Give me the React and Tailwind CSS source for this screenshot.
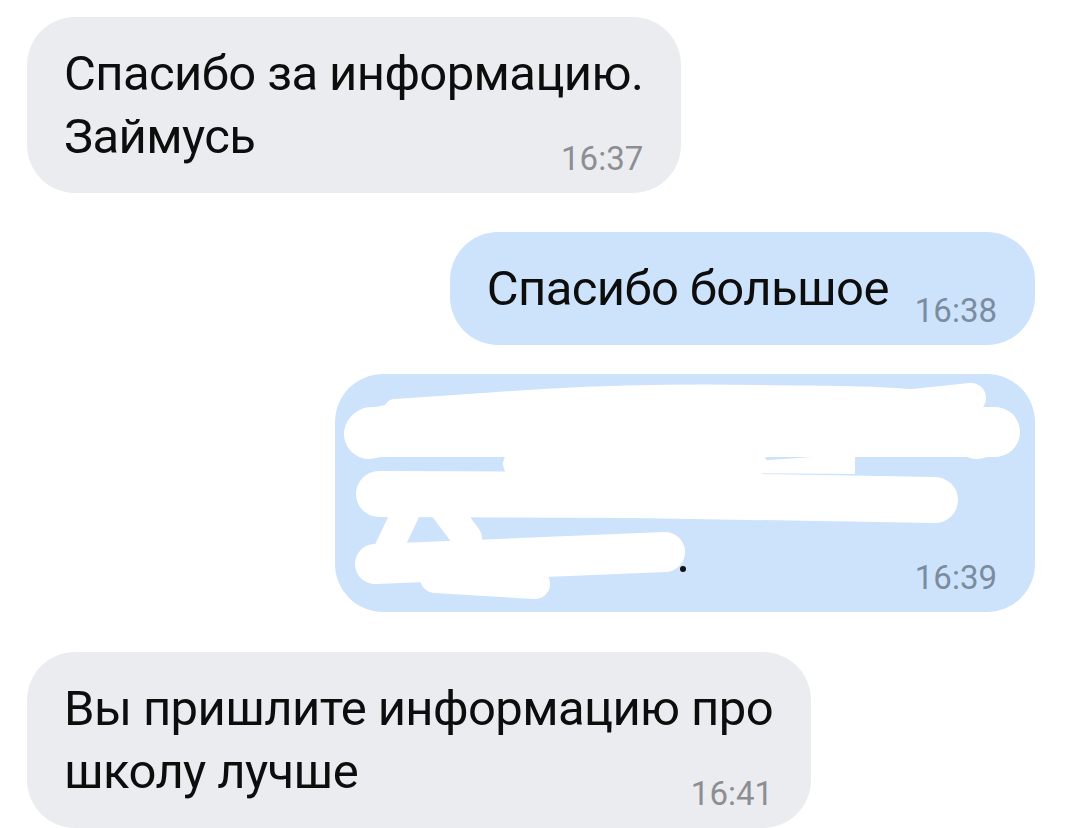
const inbound = "bg-[#ebecf0]";
const outbound = "bg-[#cde3fc]";

const Time = ({ value, mine }) => (
  <span
    className={`ml-auto pl-[26px] mb-[-7px] text-[33px] leading-[33px] tracking-normal whitespace-nowrap ${
      mine ? "text-[#7b8c9f]" : "text-[#8e8e92]"
    }`}
  >
    {value}
  </span>
);

const Bubble = ({ lines, time, mine, className = "" }) => {
  const head = lines.slice(0, -1);
  const last = lines[lines.length - 1];
  return (
    <div
      className={`rounded-[48px] pl-[37px] pr-[38px] pt-[25px] pb-[25px] text-[49px] leading-[63px] tracking-[-0.6px] text-[#0d0d0d] ${
        mine ? outbound + " self-end" : inbound + " self-start"
      } ${className}`}
    >
      {head.map((line) => (
        <div key={line} className="whitespace-nowrap">
          {line}
        </div>
      ))}
      <div className="flex items-end">
        <span className="whitespace-nowrap">{last}</span>
        <Time value={time} mine={mine} />
      </div>
    </div>
  );
};

// the hidden message: scribbled over in white
const Scribbled = ({ className = "" }) => (
  <div
    className={`relative self-end rounded-[48px] pl-[37px] pr-[38px] pt-[24px] pb-[25px] ${outbound} ${className}`}
  >
    <div className="h-[126px] w-[625px]" />
    <div className="flex items-end h-[63px] text-[49px] leading-[63px]">
      <span className="w-[300px]" />
      <Time value="16:39" mine />
    </div>
    <svg
      className="absolute inset-0"
      width="700"
      height="238"
      viewBox="0 0 700 238"
      fill="none"
      stroke="#fff"
      strokeLinecap="round"
      strokeLinejoin="round"
    >
      <circle cx="348" cy="195" r="3" fill="#111" stroke="none" />
      <circle cx="56" cy="201" r="2" fill="#777" stroke="none" />
      <path d="M34 60 C120 40 300 34 420 36 S600 34 642 60" strokeWidth="50" />
      <path d="M36 58 L660 58" strokeWidth="50" />
      <path d="M540 34 L636 24" strokeWidth="30" />
      <path d="M60 36 L150 30" strokeWidth="22" />
      <polygon points="260,98 520,80 520,100" fill="#fff" stroke="none" />
      <path d="M180 90 L420 90" strokeWidth="24" />
      <path d="M44 120 L300 121 L600 126" strokeWidth="46" />
      <path d="M40 190 L330 178" strokeWidth="40" />
      <path d="M100 204 L200 210" strokeWidth="30" />
      <path d="M70 140 L52 178" strokeWidth="28" />
      <path d="M108 132 L132 164" strokeWidth="30" />
    </svg>
  </div>
);

export default function App() {
  return (
    <div className="min-h-screen w-full bg-white font-['Roboto',sans-serif] flex flex-col pt-[17px] pl-[27px] pr-[33px]">
      <Bubble
        lines={["Спасибо за информацию.", "Займусь"]}
        time="16:37"
      />
      <Bubble lines={["Спасибо большое"]} time="16:38" mine className="mt-[39px]" />
      <Scribbled className="mt-[29px]" />
      <Bubble
        lines={["Вы пришлите информацию про", "школу лучше"]}
        time="16:41"
        className="mt-[40px]"
      />
    </div>
  );
}
